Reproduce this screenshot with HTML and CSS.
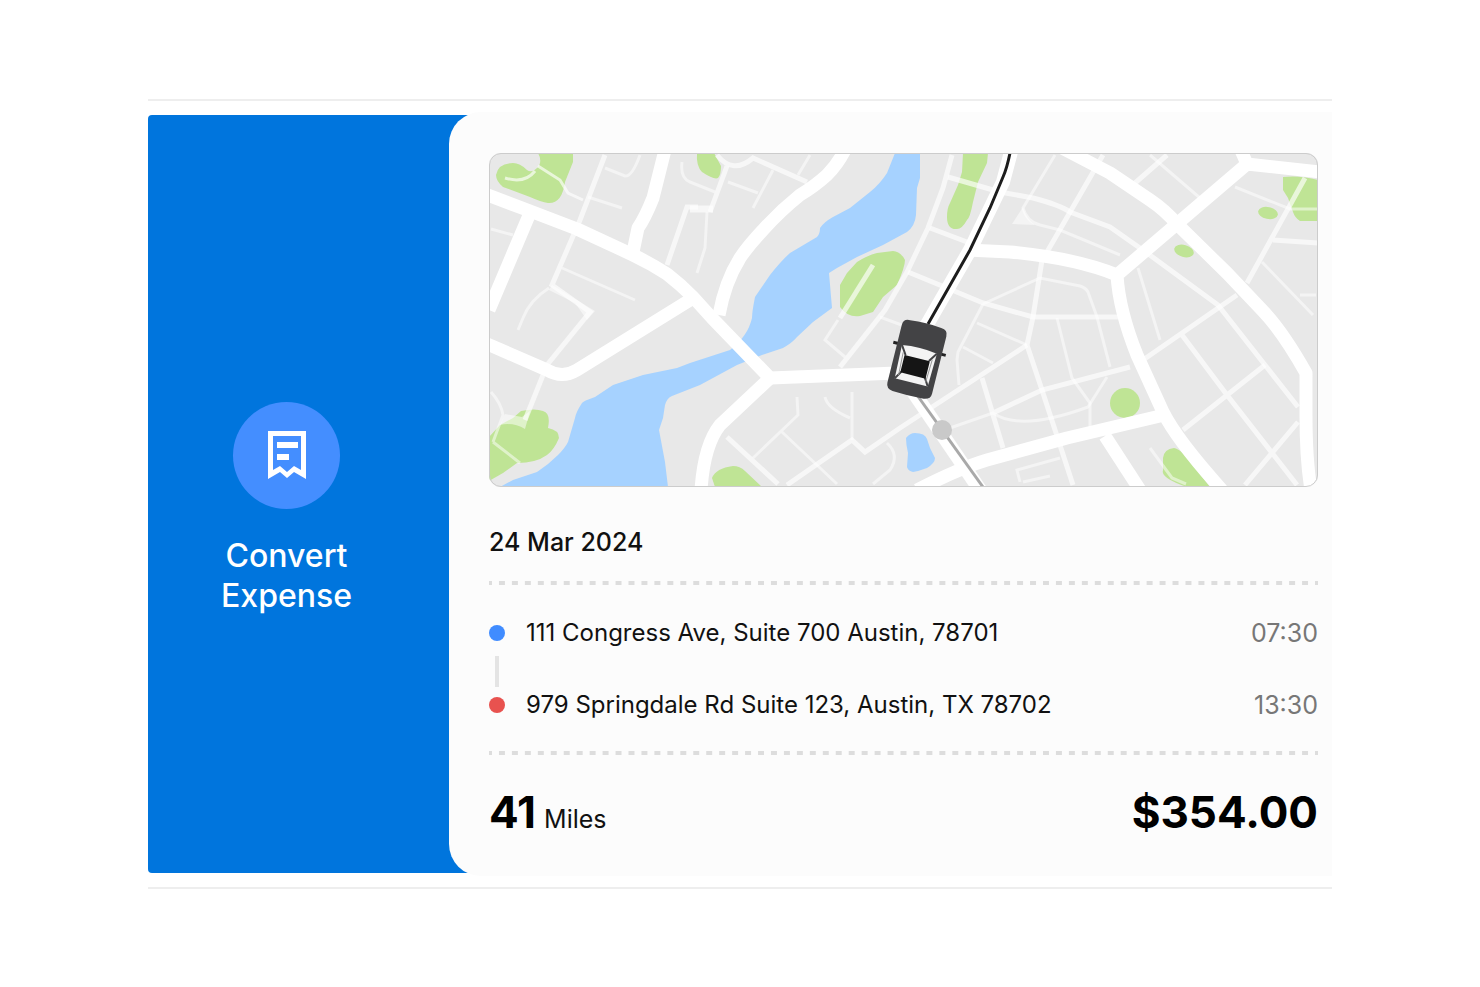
FILE: index.html
```html
<!DOCTYPE html>
<html lang="en">
<head>
    <meta charset="UTF-8">
    <meta name="viewport" content="width=device-width, initial-scale=1.0">
    <title>Mileage Expense</title>
    <link rel="stylesheet" href="styles.css">
</head>
<body>

    <main class="trip">
        <button type="button" class="convert">
            <span class="convert-icon">
                <svg width="38" height="48" viewBox="0 0 38 48" aria-hidden="true">
                    <path fill="#fff" fill-rule="evenodd" d="M0 0H38V48L26 41L19 47L12 41L0 48ZM5 5V39L12 35L19 41L26 35L33 39V5Z"/>
                    <path fill="#fff" d="M9 11H30V17H9ZM9 23H21V29H9Z"/>
                </svg>
            </span>
            <span>Convert<br>Expense</span>
        </button>

        <section class="details">
            <svg class="map" viewBox="489 153 829 334" role="img" aria-label="Trip route">
                <rect x="489" y="153" width="829" height="334" fill="#e8e8e8"/>

                <!-- parks -->
                <g fill="#bfe495">
                    <path d="M538 153H573V162L565 182Q562 204 548 203Q541 202 530 197L503 187Q496 181 496 175Q498 163 513 163Q520 163 527 170Q532 174 539 166Q542 160 538 153Z"/>
                    <path d="M697 153H714L721 166Q721 175 718 178Q714 180 702 172Q696 166 697 153Z"/>
                    <path d="M963 153H988L987 163L978 182L973 202Q970 218 967 220Q962 229 957 229Q947 230 947 217Q947 208 950 203L958 185L962 172Z"/>
                    <path d="M857 262Q868 255 877 253L893 251Q901 252 905 260Q905 267 897 285L883 297L873 312L860 316Q848 318 840 307V285L847 273Z"/>
                    <path d="M1283 177Q1300 175 1318 180V221H1300Q1295 218 1293 212L1288 198L1283 190Z"/>
                    <ellipse cx="1268" cy="213" rx="10" ry="6" transform="rotate(12 1268 213)"/>
                    <ellipse cx="1184" cy="251" rx="10" ry="6" transform="rotate(16 1184 251)"/>
                    <circle cx="1125" cy="403" r="15"/>
                    <path d="M1163 458Q1164 449 1174 448Q1181 449 1193 465L1210 487H1187Q1160 478 1163 470Z"/>
                    <path d="M715 487L712 478Q716 468 733 466Q740 466 745 471L762 487Z"/>
                    <path d="M489 481V437L500 425L513 418L521 411Q535 408 543 411Q551 413 548 428Q559 430 559 438Q554 450 547 455Q536 463 517 463L503 473Z"/>
                </g>

                <!-- river and pond -->
                <g fill="#a6d2ff">
                    <path d="M895 153L887 173Q880 184 870 192L850 208L833 217Q824 222 820 228Q820 234 817 237L790 253Q781 261 770 275L755 297Q752 312 752 318Q748 336 730 350L690 363L677 368L643 375L613 385L595 397Q583 401 582 403Q576 412 575 418L568 442Q565 448 558 455Q548 465 537 472L513 480L500 487H668L665 462L659 430L663 418L665 405Q667 398 672 396L700 385L737 365L762 355L783 348Q792 343 797 337L813 322L832 308L829 273L837 268L857 257L883 245L907 232Q915 226 916 215L917 188L920 178V153Z"/>
                    <path d="M906 438Q910 433 915 433Q925 433 927 439L930 448L935 458Q935 463 927 468Q919 471 913 472Q908 471 907 467L908 453Q906 445 906 438Z"/>
                </g>

                <!-- lanes -->
                <g fill="none" stroke="#fff" stroke-opacity=".65" stroke-width="5">
                    <path d="M605 155L580 220L552 285L590 312L547 365L525 420"/>
                    <path d="M538 166L560 180L568 193L583 200" stroke-width="3"/>
                    <path d="M505 178Q525 184 535 171" stroke-width="3"/>
                    <path d="M667 265L687 207H698"/>
                    <path d="M727 166L710 212"/>
                    <path d="M690 209H713" stroke-width="7"/>
                    <path d="M717 155Q733 175 753 158L807 182"/>
                    <path d="M952 155L943 188L928 228L907 272L885 310L840 367"/>
                    <path d="M948 177L1000 192L1033 198Q1060 205 1070 212L1110 227L1147 253L1218 305L1265 365L1298 407"/>
                    <path d="M930 228L967 242M908 272L947 288L983 303L1033 317H1122"/>
                    <path d="M873 265L840 318"/>
                    <path d="M1103 155L1047 252M1042 260L1033 317L1027 345L1042 390L1073 485"/>
                    <path d="M1027 345L900 428L865 452L852 440L787 485"/>
                    <path d="M982 378L1003 448M993 413L1042 390L1130 367"/>
                    <path d="M1143 360L1237 295M1182 335L1227 395L1297 485M1183 430L1265 365M1245 485L1298 422"/>
                    <path d="M1167 155L1135 183M1305 178L1247 283M1273 240L1318 243"/>
                    <path d="M727 437L778 484"/>
                </g>
                <g fill="none" stroke="#fff" stroke-opacity=".5" stroke-width="3">
                    <path d="M549 288Q530 300 523 318L518 330M562 268L635 300"/>
                    <path d="M588 197L622 208M605 168L625 176Q632 177 640 155M491 229L513 235"/>
                    <path d="M682 162Q680 178 690 182L715 192M707 212L705 248L697 273"/>
                    <path d="M810 155L798 175M773 170L753 208M728 182L758 193"/>
                    <path d="M1055 155L1023 208Q1027 222 1040 225L1060 230L1120 255"/>
                    <path d="M983 304L1040 278L1080 286Q1086 288 1088 292L1097 317L1110 367M983 304L958 352L957 360L959 385"/>
                    <path d="M977 323L1027 345M963 347L993 363M950 428L993 413Q1020 432 1088 407L1107 377"/>
                    <path d="M1057 318L1072 378L1090 403V427M1020 482L1017 470L1060 458M1023 482L1050 476"/>
                    <path d="M1138 268L1160 340M1150 155L1200 198M1235 187L1290 209H1318"/>
                    <path d="M1262 262L1313 315M1300 295H1316M1150 448L1172 478L1186 484"/>
                    <path d="M753 458L798 415L797 397M782 432L837 484"/>
                    <path d="M852 392V440M825 397Q827 408 850 418M887 443Q900 455 890 470L873 484"/>
                    <path d="M838 320L825 340L845 357M880 317L907 327"/>
                    <path d="M491 392Q501 403 503 415L493 442M493 442L520 463"/>
                </g>
                <g fill="#fff" fill-opacity=".5">
                    <path d="M500 425L505 414L522 417L530 411L525 429Q513 422 500 425Z"/>
                    <path d="M1012 224L1023 207Q1027 220 1035 225Z"/>
                    <path d="M552 285L595 311L587 320L575 303L549 290Z"/>
                </g>

                <!-- main roads -->
                <g fill="none" stroke="#fff" stroke-width="13" stroke-linejoin="round">
                    <path d="M485 194L530 211L577 229L633 255Q650 263 667 274Q680 284 693 297L712 318L770 378L897 373"/>
                    <path d="M530 213L489 310M665 150L653 198Q645 218 638 228L633 252"/>
                    <path d="M690 300L577 370Q562 379 547 370L485 343"/>
                    <path d="M846 148Q838 164 827 175Q815 186 800 195Q780 211 763 230Q748 246 740 258Q725 282 719 315"/>
                    <path d="M770 378L720 425Q704 445 701 490"/>
                    <path d="M1012 148L1003 182L970 250L925 328" stroke-width="14"/>
                    <path d="M967 250L1010 252Q1075 258 1117 275"/>
                    <path d="M1062 148L1110 173L1150 200Q1165 210 1178 225L1227 273L1263 311Q1283 332 1306 373V415Q1306 460 1311 490"/>
                    <path d="M1240 148L1247 164L1320 172M1247 164L1117 275Q1119 310 1137 355L1163 412Q1177 440 1222 490"/>
                    <path d="M1160 416L1067 438L987 460Q960 468 917 490M1105 436L1140 490"/>
                    <path d="M912 390L980 490" stroke-width="14"/>
                </g>
                <path d="M489 153H500Q489 155 489 170Z" fill="#fff"/>

                <!-- route -->
                <path d="M1010 153Q1007 168 1003 177L990 208L970 250L928 324" fill="none" stroke="#1d1d1d" stroke-width="3"/>
                <path d="M917 395L983 487" fill="none" stroke="#a9a9a9" stroke-width="3"/>
                <circle cx="942" cy="430" r="10" fill="#c9c9c9"/>

                <!-- car -->
                <g transform="translate(917 359) rotate(14)">
                    <path d="M-27 -12H27V-9H-27Z" fill="#222"/>
                    <path d="M-23 -29Q-23 -36 -16 -36Q0 -38 16 -36Q23 -36 23 -29V30Q23 36 16 37Q0 38 -16 37Q-23 36 -23 30Z" fill="#434345"/>
                    <path d="M-18 -10Q0 -13 18 -10L17 24H-17Z" fill="#f4f4f4"/>
                    <path d="M-18 -10L-12 -1M18 -10L12 -1M-17 24L-12 16M17 24L12 16" stroke="#434345" stroke-width="2"/>
                    <path d="M-15 -3L-14 20M15 -3L14 20" stroke="#999" stroke-width="1"/>
                    <rect x="-13" y="-1" width="26" height="18" rx="1" fill="#151515"/>
                </g>
            </svg>

            <h2 class="date">24 Mar 2024</h2>

            <div class="stops">
                <div class="stop">
                    <span class="dot start"></span>
                    <span>111 Congress Ave, Suite 700 Austin, 78701</span>
                    <time>07:30</time>
                </div>
                <div class="link"></div>
                <div class="stop">
                    <span class="dot end"></span>
                    <span>979 Springdale Rd Suite 123, Austin, TX 78702</span>
                    <time>13:30</time>
                </div>
            </div>

            <div class="total">
                <div class="distance"><strong>41</strong><span>Miles</span></div>
                <strong>$354.00</strong>
            </div>
        </section>
    </main>

</body>
</html>
```
FILE: styles.css
```css
* {
    box-sizing: border-box;
}

body {
    margin: 0;
    min-height: 100vh;
    display: flex;
    align-items: center;
    justify-content: center;
    background: #fff;
    color: #111;
    font-family: Inter, "Liberation Sans", sans-serif;
    font-size: 24px;
    line-height: 30px;
}

.trip {
    display: flex;
    width: 80%;
    padding: 11px 0;
    border-top: 2px solid #eee;
    border-bottom: 2px solid #eee;
}

.convert {
    flex: 0 0 320px;
    display: flex;
    flex-direction: column;
    align-items: center;
    justify-content: center;
    gap: 27px;
    margin: 3px 0;
    padding: 30px 43px 0 0;
    border: none;
    border-radius: 4px 0 0 4px;
    background: #0075dd;
    color: #fff;
    font-family: inherit;
    font-size: 32px;
    font-weight: 500;
    line-height: 40px;
    cursor: pointer;
}

.convert-icon {
    display: flex;
    align-items: center;
    justify-content: center;
    width: 107px;
    height: 107px;
    border-radius: 50%;
    background: #448eff;
}

.details {
    flex: 1;
    min-width: 0;
    margin-left: -19px;
    padding: 41px 14px 32px 40px;
    border-radius: 32px 0 0 32px;
    background: #fcfcfc;
}

.map {
    display: block;
    width: 100%;
    height: auto;
    border-radius: 12px;
    outline: 1px solid #ccc;
    outline-offset: -1px;
}

.date {
    margin: 40px 0 24px;
    font-size: 25px;
    font-weight: 500;
    line-height: 30px;
}

/* dashed rules above and below the stops */
.stops {
    padding: 37px 0 35px;
    background-image:
        linear-gradient(90deg, #ddd 3px, transparent 3px 10px, #ddd 10px),
        linear-gradient(90deg, #ddd 3px, transparent 3px 10px, #ddd 10px);
    background-position: left top, left bottom;
    background-repeat: round no-repeat;
    background-size: 13px 4px;
}

.stop {
    display: flex;
    align-items: center;
    gap: 21px;
}

.stop time {
    margin-left: auto;
    color: #777;
    font-size: 25px;
}

.dot {
    width: 16px;
    height: 16px;
    border-radius: 50%;
}

.start {
    background: #408cff;
}

.end {
    background: #e8524f;
}

.link {
    width: 4px;
    height: 31px;
    margin: 8px 0 3px 6px;
    background: #e4e4e4;
}

.total {
    display: flex;
    align-items: baseline;
    justify-content: space-between;
    margin-top: 32px;
    line-height: 50px;
}

.total strong {
    color: #000;
    font-size: 44px;
    font-weight: 700;
}

.distance {
    display: flex;
    align-items: baseline;
    gap: 8px;
    font-size: 25px;
}
```
